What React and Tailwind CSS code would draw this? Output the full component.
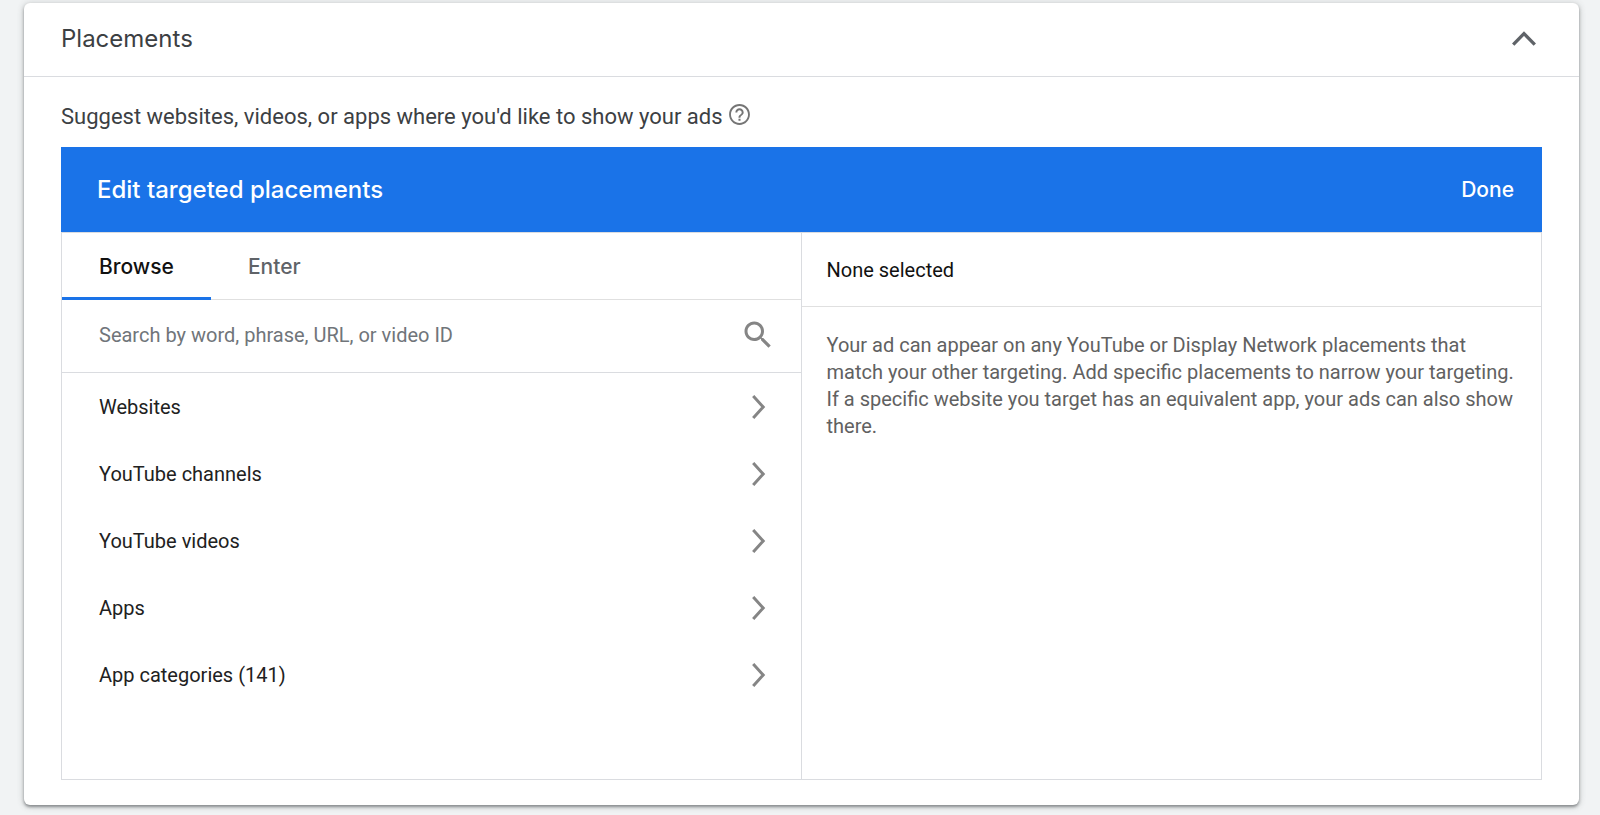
import { useState } from 'react';

const categories = [
  'Websites',
  'YouTube channels',
  'YouTube videos',
  'Apps',
  'App categories (141)',
];

function ChevronUp() {
  return (
    <svg width="24" height="16" viewBox="0 0 24 16" fill="none" aria-hidden="true">
      <path d="M1.200 13.700 12 2.700 22.800 13.700" stroke="#5f6368" strokeWidth="3.3" />
    </svg>
  );
}

function ChevronRight() {
  return (
    <svg width="14" height="24" viewBox="0 0 14 24" fill="none" aria-hidden="true">
      <path d="M1.200 1 11.200 12 1.200 23" stroke="#858585" strokeWidth="3" />
    </svg>
  );
}

function HelpIcon() {
  return (
    <svg width="25" height="25" viewBox="0 0 24 24" fill="#757575" aria-hidden="true">
      <path d="M11 18h2v-2h-2v2zm1-16C6.480 2 2 6.480 2 12s4.480 10 10 10 10-4.480 10-10S17.520 2 12 2zm0 18.200c-4.520 0-8.200-3.680-8.200-8.200S7.480 3.800 12 3.800s8.200 3.680 8.200 8.200-3.680 8.200-8.200 8.200zm0-14.200c-2.210 0-4 1.790-4 4h1.900c0-1.150.95-2.100 2.100-2.100s2.100.95 2.100 2.100c0 2-3.100 1.850-3.100 5h1.900c0-2.250 3.100-2.500 3.100-5 0-2.210-1.790-4-4-4z" />
    </svg>
  );
}

function SearchIcon() {
  return (
    <svg width="36" height="36" viewBox="0 0 24 24" fill="#858585" aria-hidden="true">
      <path d="M15.500 14h-.79l-.28-.27C15.410 12.590 16 11.110 16 9.500 16 5.910 13.090 3 9.500 3S3 5.910 3 9.500 5.910 16 9.500 16c1.610 0 3.090-.59 4.230-1.570l.27.28v.79l5 4.990L20.490 19l-4.990-5zm-6 0C7.010 14 5 11.990 5 9.500S7.010 5 9.500 5 14 7.010 14 9.500 11.990 14 9.500 14z" />
    </svg>
  );
}

function Tab({ label, active, onClick }) {
  return (
    <button
      type="button"
      role="tab"
      aria-selected={active}
      onClick={onClick}
      className={
        active
          ? '-mb-px border-b-3 border-[#1a73e8] px-[37px] pt-1 font-[Inter,sans-serif] text-[21px] font-medium text-[#111111]'
          : '-mb-px border-b-3 border-transparent px-[37px] pt-1 font-[Inter,sans-serif] text-[21px] font-medium text-[#5f6368]'
      }
    >
      {label}
    </button>
  );
}

export default function App() {
  const [tab, setTab] = useState('Browse');
  const [open, setOpen] = useState(true);

  return (
    <div className="min-h-screen bg-[#f1f3f4] pt-[3px] pr-[21px] pb-[10px] pl-6 font-[Roboto,sans-serif]">
      <section className="rounded-md bg-white shadow-[0_2px_3px_rgba(60,64,67,0.5),0_1px_6px_1px_rgba(60,64,67,0.2)]">
        <header className="flex h-[74px] items-center justify-between border-b border-[#dadce0] pr-[43px] pb-0.5 pl-[37px]">
          <h2 className="font-[Inter,sans-serif] text-2xl text-[#3c4043]">Placements</h2>
          <button type="button" aria-label="Collapse" aria-expanded={open} onClick={() => setOpen(!open)}>
            <ChevronUp />
          </button>
        </header>

        {open && (
          <div className="pr-[37px] pb-[25px] pl-[37px]">
            <div className="flex h-[70px] items-center gap-1 pt-2">
              <p className="text-[22px] text-[#3c4043]">
                Suggest websites, videos, or apps where you'd like to show your ads
              </p>
              <button type="button" aria-label="Help" className="pb-1">
                <HelpIcon />
              </button>
            </div>

            <div className="flex h-[85px] items-center justify-between bg-[#1a73e8] pr-7 pl-9 font-[Inter,sans-serif] font-medium text-white">
              <h3 className="text-2xl">Edit targeted placements</h3>
              <button type="button" className="text-[21px]">Done</button>
            </div>

            <div className="grid min-h-[548px] grid-cols-2 border border-[#dadce0]">
              <div className="border-r border-[#dadce0]">
                <div role="tablist" className="flex h-[67px] border-b border-[#e0e0e0]">
                  <Tab label="Browse" active={tab === 'Browse'} onClick={() => setTab('Browse')} />
                  <Tab label="Enter" active={tab === 'Enter'} onClick={() => setTab('Enter')} />
                </div>
                <div className="flex h-[73px] items-center border-b border-[#dadce0] pr-[25px] pb-0.5 pl-[37px]">
                  <input
                    type="text"
                    aria-label="Search placements"
                    placeholder="Search by word, phrase, URL, or video ID"
                    className="min-w-0 flex-1 text-xl text-[#111111] outline-none placeholder:text-[#70757a]"
                  />
                  <button type="button" aria-label="Search">
                    <SearchIcon />
                  </button>
                </div>
                <ul>
                  {categories.map((name) => (
                    <li key={name}>
                      <button
                        type="button"
                        className="flex h-[67px] w-full items-center justify-between pr-[35px] pl-[37px] text-left text-xl text-[#212121]"
                      >
                        {name}
                        <ChevronRight />
                      </button>
                    </li>
                  ))}
                </ul>
              </div>

              <div>
                <h4 className="flex h-[74px] items-center border-b border-[#e0e0e0] px-[25px] text-xl text-[#111111]">
                  None selected
                </h4>
                <p className="px-[25px] pt-[25px] text-xl leading-[27px] text-[#616161]">
                  Your ad can appear on any YouTube or Display Network placements that match your other
                  targeting. Add specific placements to narrow your targeting. If a specific website you
                  target has an equivalent app, your ads can also show there.
                </p>
              </div>
            </div>
          </div>
        )}
      </section>
    </div>
  );
}
